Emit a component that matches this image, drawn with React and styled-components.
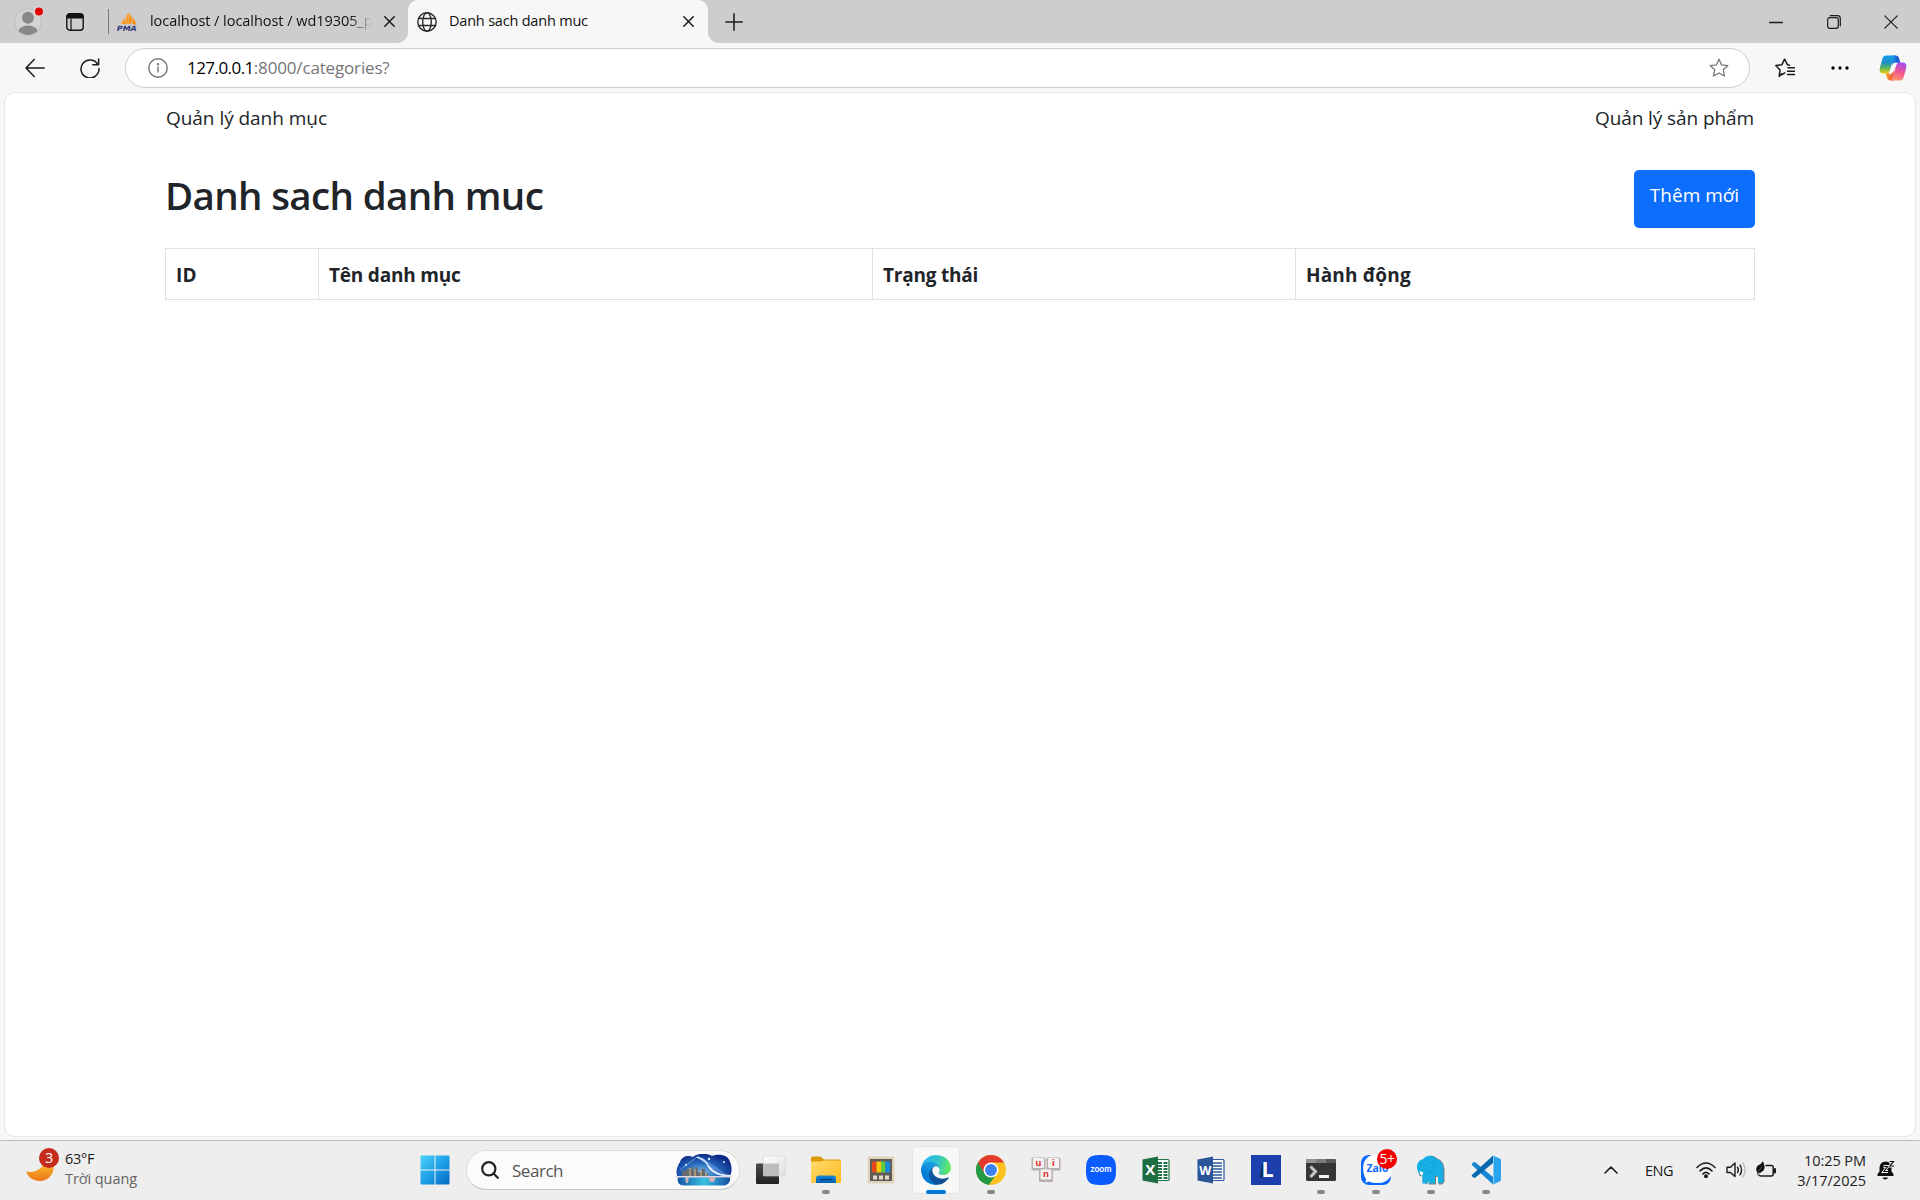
import React from "react";
import styled, { createGlobalStyle, css } from "styled-components";

const GlobalStyle = createGlobalStyle`
  * { box-sizing: border-box; }
  html, body { margin: 0; padding: 0; }
  body { font-family: "Open Sans", "Noto Sans", sans-serif; overflow: hidden; }
  svg { display: block; flex: none; }
`;

const Desktop = styled.div`
  width: 1920px;
  height: 1200px;
  display: flex;
  flex-direction: column;
  background: #f7f7f7;
`;

/* ---------- browser chrome ---------- */

const TabStrip = styled.div`
  height: 43px;
  flex: none;
  display: flex;
  background: #cdcdcd;
  color: #111;
`;

const StripCell = styled.div`
  width: ${(p) => p.$w}px;
  flex: none;
  display: flex;
  align-items: center;
  justify-content: center;
`;

const StripDivider = styled.div`
  width: 1px;
  height: 25px;
  margin: 9px 0 0 19px;
  background: #777;
`;

const Tab = styled.div`
  width: ${(p) => p.$w}px;
  height: 43px;
  flex: none;
  display: flex;
  align-items: center;
  padding: 0 0 0 8px;
  font-size: 14.5px;
  line-height: 20px;
  letter-spacing: ${(p) => p.$track}px;
  ${(p) =>
    p.$active &&
    css`
      position: relative;
      background: #f7f7f7;
      border-radius: 10px 10px 0 0;
      padding-left: 9px;
      &::before,
      &::after {
        content: "";
        position: absolute;
        bottom: 0;
        width: 10px;
        height: 10px;
      }
      &::before {
        left: -10px;
        background: radial-gradient(circle at 0 0, transparent 9.5px, #f7f7f7 10px);
      }
      &::after {
        right: -10px;
        background: radial-gradient(circle at 100% 0, transparent 9.5px, #f7f7f7 10px);
      }
    `}
`;

const TabTitle = styled.span`
  flex: none;
  width: ${(p) => p.$w}px;
  margin: 0 ${(p) => p.$after}px 2px ${(p) => p.$before}px;
  overflow: hidden;
  white-space: nowrap;
  ${(p) =>
    p.$fade &&
    css`
      mask-image: linear-gradient(to right, #000 calc(100% - 22px), transparent);
    `}
`;

const WindowControls = styled.div`
  margin: 0 1px 0 auto;
  display: flex;
`;

const Toolbar = styled.div`
  height: 49px;
  flex: none;
  display: flex;
  align-items: center;
`;

const ToolCell = styled.div`
  width: ${(p) => p.$w}px;
  flex: none;
  display: flex;
  justify-content: center;
`;

const AddressBar = styled.div`
  width: 1625px;
  height: 40px;
  flex: none;
  margin: 1px 0 0 15px;
  display: flex;
  align-items: center;
  padding: 0 20px 0 22px;
  background: #fff;
  border: 1px solid #cecece;
  border-radius: 20px;
  font-size: 17px;
  line-height: 24px;
`;

const Url = styled.span`
  margin: -1px auto 0 19px;
  color: #767676;
  letter-spacing: -0.16px;
`;

const Host = styled.span`
  color: #000;
  letter-spacing: -0.55px;
`;

const Viewport = styled.main`
  width: 1912px;
  height: 1045px;
  flex: none;
  margin: 0 auto 0 4px;
  background: #fff;
  border: 1px solid #e6e6e6;
  border-radius: 11px;
`;

/* ---------- page ---------- */

const Container = styled.div`
  width: 1590px;
  margin: 0 0 0 160px;
  color: #212529;
  font-size: 19px;
  line-height: 30px;
`;

const Nav = styled.nav`
  display: flex;
  justify-content: space-between;
  padding: 10px 1px 0 1px;
`;

const NavLink = styled.span`
  letter-spacing: ${(p) => p.$track}px;
`;

const PageHeader = styled.header`
  display: flex;
  justify-content: space-between;
  margin-top: 37px;
  height: 58px;
`;

const Title = styled.h1`
  margin: 0;
  font-size: 38.5px;
  font-weight: 600;
  line-height: 50px;
  letter-spacing: -0.64px;
`;

const PrimaryButton = styled.button`
  width: 121px;
  padding: 10px 0 0;
  border: 0;
  border-radius: 5px;
  background: #0d6efd;
  color: #fff;
  font: inherit;
  display: flex;
  justify-content: center;
`;

const Table = styled.table`
  width: 1590px;
  margin-top: 20px;
  table-layout: fixed;
  border-collapse: collapse;
`;

const HeadCell = styled.th`
  width: ${(p) => p.$w}px;
  height: 51px;
  padding: 2px 10px 0;
  text-align: left;
  font-weight: 700;
  letter-spacing: ${(p) => p.$track}px;
  border: 1px solid #dee2e6;
`;

/* ---------- taskbar ---------- */

const Taskbar = styled.footer`
  height: 60px;
  margin-top: auto;
  flex: none;
  display: flex;
  align-items: stretch;
  background: #eee;
  box-shadow: inset 0 1px #bbb;
  font-size: 14.5px;
  line-height: 20px;
  color: #1b1b1b;
`;

const Weather = styled.div`
  width: 407px;
  display: flex;
  padding: 6px 0 0 26px;
`;

const WeatherIcon = styled.div`
  position: relative;
  width: 39px;
  height: 48px;
  padding-top: 15px;
`;

const Badge = styled.span`
  position: absolute;
  left: ${(p) => p.$x}px;
  top: ${(p) => p.$y}px;
  width: 20px;
  height: 20px;
  border-radius: 50%;
  background: ${(p) => p.$bg};
  color: #fff;
  font-size: 14px;
  line-height: 20px;
  letter-spacing: -0.4px;
  text-align: center;
`;

const Lines = styled.div`
  display: flex;
  flex-direction: column;
  padding-top: 3px;
`;

const Line = styled.span`
  color: ${(p) => (p.$muted ? "#636363" : "#1b1b1b")};
  letter-spacing: ${(p) => p.$track || 0}px;
`;

const Slot = styled.div`
  position: relative;
  width: 55px;
  display: flex;
  align-items: center;
  justify-content: center;
  &::after {
    content: "";
    position: absolute;
    bottom: 6px;
    height: 4px;
    border-radius: 2px;
    width: ${(p) => (p.$active ? 20 : p.$open ? 8 : 0)}px;
    background: ${(p) => (p.$active ? "#0078d4" : "#868686")};
  }
`;

const ActiveTile = styled.div`
  width: 48px;
  height: 48px;
  display: flex;
  align-items: center;
  justify-content: center;
  background: #f8f8f8;
  border: 1px solid #e2e2e2;
  border-radius: 5px;
`;

const SearchBox = styled.div`
  width: 274px;
  height: 40px;
  margin: 10px 3px 0 4px;
  display: flex;
  align-items: center;
  justify-content: space-between;
  padding: 0 6px 0 14px;
  background: #fbfbfb;
  border: 1px solid #ddd;
  border-bottom-color: #c4c4c4;
  border-radius: 20px;
`;

const SearchLabel = styled.span`
  margin: 1px auto 0 13px;
  font-size: 17px;
  letter-spacing: -0.47px;
  color: #555;
`;

const Tray = styled.div`
  margin-left: auto;
  display: flex;
  align-items: center;
  padding-right: 25px;
`;

const Language = styled.span`
  width: 30px;
  margin: 1px 21px 0 27px;
  letter-spacing: -0.45px;
`;

const TrayIcons = styled.div`
  display: flex;
  gap: 10px;
  width: 82px;
`;

const Clock = styled(Lines)`
  width: 88px;
  margin: 0 11px 0 0;
  padding: 1px 0 0;
  text-align: right;
`;

/* ---------- icons ---------- */

const Stroke = ({ size = 20, h, w = 1.3, color = "#1a1a1a", children }) => (
  <svg width={size} height={h || size} viewBox={`0 0 ${size} ${h || size}`} fill="none" stroke={color} strokeWidth={w} strokeLinecap="round" strokeLinejoin="round">
    {children}
  </svg>
);

const Avatar = () => (
  <svg width="32" height="32" viewBox="0 0 32 32">
    <defs><clipPath id="av"><circle cx="14" cy="16" r="13" /></clipPath></defs>
    <circle cx="14" cy="16" r="13.3" fill="#d5d3d1" stroke="#bdbbb9" strokeWidth=".8" />
    <g clipPath="url(#av)" fill="#8a8886">
      <circle cx="14" cy="11.800" r="6" />
      <ellipse cx="14" cy="26.500" rx="10" ry="7" />
    </g>
    <circle cx="25" cy="5.500" r="5" fill="#dcdcdc" />
    <circle cx="25" cy="5.500" r="4" fill="#e60000" />
  </svg>
);

const Workspaces = () => (
  <svg width="18" height="18" viewBox="0 0 18 18">
    <rect x=".8" y=".8" width="16.4" height="16.4" rx="3" fill="none" stroke="#111" strokeWidth="1.4" />
    <path d="M.5 5.500V3.500a3 3 0 0 1 3-3h11a3 3 0 0 1 3 3v2z" fill="#111" />
    <path d="M5 5.500V17" stroke="#111" strokeWidth="1.2" />
  </svg>
);

const PmaText = styled.text`
  font: italic 800 7.2px "DejaVu Sans", sans-serif;
  fill: #2f3a78;
`;

const PhpMyAdmin = () => (
  <svg width="20" height="20" viewBox="0 0 20 20">
    <defs><linearGradient id="pm"><stop offset="0" stopColor="#fcd9a4" /><stop offset="1" stopColor="#f68a06" /></linearGradient></defs>
    <path d="M6.800 3C7 7 5.500 11 1 13.200C3 12 6 12 8 12.200Z" fill="url(#pm)" />
    <path d="M11.500.5C8.300 4 8.600 9 7.500 12.500Q10 11.500 12.500 12C11 8 12.500 4 11.500.5Z" fill="#f9a12f" />
    <path d="M12.300 1C15 4 15 8 14.500 11.500L12.600 12C11.600 8 12.900 4 12.300 1ZM15 4.500C17.500 7 18.500 10 19.300 12.800L15.200 12C16 9 15.800 7 15 4.500Z" fill="#f68a06" />
    <PmaText x="-.2" y="19.200" textLength="20" lengthAdjust="spacingAndGlyphs">PMA</PmaText>
  </svg>
);

const Cross = ({ size = 11, w = 1.5 }) => (
  <Stroke size={size} w={w}><path d={`M.8.8 ${size - 0.8} ${size - 0.8}M${size - 0.8}.8.8 ${size - 0.8}`} /></Stroke>
);

const Globe = () => (
  <Stroke w={1.4} color="#2b2b2b">
    <circle cx="10" cy="10" r="9.200" />
    <ellipse cx="10" cy="10" rx="4.300" ry="9.200" />
    <path d="M1.500 6.500h17M1.500 13.500h17" />
  </Stroke>
);

const Copilot = () => (
  <svg width="28" height="26" viewBox="0 0 28 26">
    <defs>
      <linearGradient id="ca" x1="0" y1="0" x2="0" y2="1"><stop offset="0" stopColor="#169bea" /><stop offset=".4" stopColor="#1e90c8" /><stop offset=".7" stopColor="#5fb85a" /><stop offset="1" stopColor="#f4cf0b" /></linearGradient>
      <linearGradient id="cb" x1=".6" y1="0" x2=".3" y2="1"><stop offset="0" stopColor="#a84df0" /><stop offset=".5" stopColor="#f0568c" /><stop offset="1" stopColor="#fd9b6d" /></linearGradient>
      <linearGradient id="cc"><stop offset="0" stopColor="#1d8fe8" /><stop offset="1" stopColor="#1b46c4" /></linearGradient>
      <linearGradient id="cd"><stop offset="0" stopColor="#f9a529" /><stop offset="1" stopColor="#ec4b3c" /></linearGradient>
    </defs>
    <path d="M13 .5h3.500c2 0 3 1 3.500 2.800l1.300 4.400h-4.500c-2 0-3 1-3.500 3z" fill="url(#cc)" />
    <path d="M15 25.500h-3.500c-2 0-3-1-3.500-2.800L6.700 18.300h4.500c2 0 3-1 3.500-3z" fill="url(#cd)" />
    <path d="M7 .5h10c-1.500.3-2.200 1.500-2.700 3.200L11 15c-.8 2.500-1.800 3.500-4 3.500H4.500C1.500 18.500 0 16.500.8 13L3.300 4C4 1.700 5 .5 7 .5z" fill="url(#ca)" />
    <path d="M21 25.500H11c1.500-.3 2.200-1.500 2.700-3.200L17 11c.8-2.500 1.800-3.500 4-3.500h2.500c3 0 4.500 2 3.700 5.500L24.700 22c-.7 2.300-1.700 3.500-3.700 3.500z" fill="url(#cb)" />
    <path d="M15.800 7.800h1.500c-1.300.5-1.800 1.400-2.300 3l-2 7c-.4 1-.8 1.600-1.800 1.800h-1.400c1.300-.5 1.700-1.300 2.200-2.800l2-7c.4-1.200.8-1.800 1.800-2z" fill="#fff" />
  </svg>
);

const Moon = () => (
  <svg width="28" height="20" viewBox="0 0 28 20">
    <defs><linearGradient id="mo" x1="0" y1="0" x2="0" y2="1"><stop offset="0" stopColor="#f7c531" /><stop offset="1" stopColor="#ee7417" /></linearGradient></defs>
    <path d="M.3 10.500C8 12.500 17 8 18.500.2C24-1 27.700 2 27.700 6.500C27.700 14 21.500 20 14 20C7.500 20 2 16.500.3 10.500z" fill="url(#mo)" />
  </svg>
);

const Windows = () => (
  <svg width="30" height="30" viewBox="0 0 30 30">
    <defs><linearGradient id="wi" x1="0" y1="0" x2="1" y2="1"><stop offset="0" stopColor="#4dd2fc" /><stop offset=".5" stopColor="#1da0e6" /><stop offset="1" stopColor="#0669c4" /></linearGradient></defs>
    <path d="M1.500.5H14.500V14.500H.5V1.500a1 1 0 0 1 1-1zM15.500.5H28.500a1 1 0 0 1 1 1V14.500H15.500zM.5 15.500H14.500V29.500H1.500a1 1 0 0 1-1-1zM15.500 15.500H29.500V28.500a1 1 0 0 1-1 1H15.500z" fill="url(#wi)" />
  </svg>
);

const Bridge = () => (
  <svg width="58" height="32" viewBox="0 0 58 32">
    <defs>
      <radialGradient id="br" cx=".45" cy=".6" r=".6"><stop offset="0" stopColor="#78b9e4" /><stop offset=".5" stopColor="#286dc0" /><stop offset="1" stopColor="#0c2a88" /></radialGradient>
      <linearGradient id="bw"><stop offset="0" stopColor="#1654a5" /><stop offset=".5" stopColor="#35c3e0" /><stop offset="1" stopColor="#1750a5" /></linearGradient>
    </defs>
    <path d="M5 8C7 2 13 1 18 3C22-1 33-1 37 2C44-1 54 1 55 8C58 14 56 19 55 24C55 29 52 31 48 31H9C4 31 2 28 3 23C0 19 2 12 5 8z" fill="url(#br)" />
    <path d="M3 24H55C55 29 52 31.500 48 31.500H9C4 31.500 2 28 3 24z" fill="url(#bw)" />
    <path d="M7 22V17h4v-2h4v-2h3v3h2v-3l3 1v4h3v-3h4v4h3v3z" fill="#676b70" />
    <path d="M15 14v8M20 15v7M26 16v6M31 19v3" stroke="#e0bc82" strokeWidth="1" />
    <path d="M22 3Q31 6 34 13Q40 22 57 22" stroke="#edf3ff" strokeWidth="1.800" fill="none" />
    <path d="M23 3L48 22M27 4L52 22M5 16L22 3" stroke="#a5c8f0" strokeWidth=".6" />
    <path d="M0 22.700H57" stroke="#dcdce8" strokeWidth="1.400" />
    <path d="M10 23h4l-1 6h-2zM33 23h8l-2 5h-4z" fill="#c9b3bb" />
    <circle cx="34" cy="5" r="1.200" fill="#dfeaff" /><circle cx="49" cy="8" r="1" fill="#dfeaff" /><circle cx="11" cy="11" r="1" fill="#dfeaff" />
  </svg>
);

const TaskView = () => (
  <svg width="30" height="30" viewBox="0 0 30 30">
    <defs>
      <linearGradient id="td" x1="0" y1="0" x2="0" y2="1"><stop offset="0" stopColor="#4a4a48" /><stop offset="1" stopColor="#222" /></linearGradient>
      <linearGradient id="tl" x1="0" y1="0" x2="1" y2="1"><stop offset="0" stopColor="#fff" /><stop offset="1" stopColor="#dedede" /></linearGradient>
    </defs>
    <rect y="8.500" width="23" height="20.500" rx="1" fill="url(#td)" />
    <rect x="7.500" y="1" width="22" height="20" rx="1" fill="url(#tl)" stroke="#d5d5d5" strokeWidth=".6" />
    <path d="M7.500 8.500H23V21H7.500z" fill="#bdbdbd" />
  </svg>
);

const Explorer = () => (
  <svg width="30" height="28" viewBox="0 0 30 28">
    <defs>
      <linearGradient id="ex" x1="0" y1="0" x2="1" y2="1"><stop offset="0" stopColor="#ffdb6e" /><stop offset="1" stopColor="#fdb91c" /></linearGradient>
      <linearGradient id="eb" x1="0" y1="0" x2="0" y2="1"><stop offset="0" stopColor="#1687dc" /><stop offset="1" stopColor="#0762ad" /></linearGradient>
    </defs>
    <path d="M0 2a1.500 1.500 0 0 1 1.500-1.500H9.500L13 3.500H29a1 1 0 0 1 1 1V12H0z" fill="#dc9a05" />
    <path d="M0 6.500Q0 5.500 1 5.500H9.500L13 4.500H29q1 0 1 1V26q0 1-1 1H1q-1 0-1-1z" fill="url(#ex)" />
    <path d="M5 27V22.500a3 3 0 0 1 3-3H22a3 3 0 0 1 3 3V27z" fill="url(#eb)" />
    <path d="M9 23.500H21" stroke="#07488d" strokeWidth="1.300" strokeLinecap="round" />
  </svg>
);

const PowerToys = () => (
  <svg width="28" height="28" viewBox="0 0 28 28">
    <rect x=".5" y=".5" width="27" height="27" rx="1.500" fill="#e1d3ba" />
    <rect x="3" y="3" width="22" height="22" fill="#5e5c5a" />
    <path d="M5 5.500h4.500v11H5z" fill="#e84a1c" /><path d="M9.500 5.500H14v11H9.500z" fill="#fdc60b" />
    <path d="M14 5.500h4.500v11H14z" fill="#5fcc40" /><path d="M18.500 5.500H23v11h-4.500z" fill="#168ce0" />
    <path d="M6 19.500h4v4H6zM12 19.500h4v4h-4zM18 19.500h4v4h-4z" fill="#e5dac5" />
  </svg>
);

const Edge = () => (
  <svg width="30" height="30" viewBox="0 0 256 256">
    <defs>
      <linearGradient id="e1" x1="60" y1="180" x2="240" y2="180" gradientUnits="userSpaceOnUse"><stop offset="0" stopColor="#0c59a4" /><stop offset="1" stopColor="#114a8b" /></linearGradient>
      <linearGradient id="e2" x1="150" y1="100" x2="45" y2="220" gradientUnits="userSpaceOnUse"><stop offset="0" stopColor="#1b9de2" /><stop offset=".3" stopColor="#1595df" /><stop offset=".7" stopColor="#0680d7" /><stop offset="1" stopColor="#0078d4" /></linearGradient>
      <linearGradient id="e3" x1="20" y1="60" x2="250" y2="110" gradientUnits="userSpaceOnUse"><stop offset="0" stopColor="#2eb4ec" /><stop offset=".5" stopColor="#31c5c9" /><stop offset="1" stopColor="#66eb5c" /></linearGradient>
    </defs>
    <path fill="url(#e1)" d="M231 190.500c-3.400 1.800-6.900 3.400-10.500 4.700a101.900 101.900 0 0 1-35.900 6.500c-47.300 0-88.500-32.500-88.500-74.300a31.500 31.500 0 0 1 16.400-27.300c-42.800 1.800-53.800 46.400-53.800 72.500 0 73.900 68.100 81.400 82.800 81.400 7.900 0 19.800-2.300 27-4.600l1.300-.4a128.300 128.300 0 0 0 66.600-52.800 4 4 0 0 0-5.400-5.700z" />
    <path fill="url(#e2)" d="M105.700 241.400a79.200 79.200 0 0 1-22.700-21.300 80.700 80.700 0 0 1 29.500-120c3.200-1.500 8.500-4.100 15.600-4a32.400 32.400 0 0 1 25.700 13 31.900 31.900 0 0 1 6.300 18.700c0-.2 24.500-79.600-80-79.600-43.900 0-80 41.600-80 78.200a130.200 130.200 0 0 0 12.100 56 128 128 0 0 0 156.400 67.100 75.500 75.500 0 0 1-62.900-8.100z" />
    <path fill="url(#e3)" d="M152.300 148.900c-.9 1-3.400 2.500-3.400 5.600 0 2.600 1.700 5.200 4.800 7.300 14.300 10 41.400 8.600 41.500 8.600a59.600 59.600 0 0 0 30.300-8.300 61.400 61.400 0 0 0 30.400-52.900c.3-22.400-8-37.300-11.300-43.900C223.500 23.900 177.700 0 128 0A128 128 0 0 0 0 126.200c.5-36.500 36.800-66 80-66 3.500 0 23.500.3 42 10.100 16.300 8.600 24.900 19 30.800 29.200 6.200 10.700 7.300 24.100 7.300 29.500 0 5.300-2.700 13.300-7.800 19.900z" />
  </svg>
);

const Chrome = () => (
  <svg width="30" height="30" viewBox="0 0 48 48">
    <circle cx="24" cy="24" r="24" fill="#fcc31e" />
    <path d="M3.200 12l10.400 18A12 12 0 0 0 24 36c1.200 0 2.300-.2 3.400-.5L20.500 47.700A24 24 0 0 1 3.200 12z" fill="#249a45" />
    <path d="M20.500 47.700L30.500 34L24 24L3.200 12A24 24 0 0 0 20.500 47.700z" fill="#249a45" />
    <path d="M24 0c8.900 0 16.600 4.800 20.800 12H24L13.600 30L3.200 12A24 24 0 0 1 24 0z" fill="#e33b2e" />
    <circle cx="24" cy="24" r="12" fill="#fff" /><circle cx="24" cy="24" r="9.500" fill="#3e82f1" />
  </svg>
);

const KeyLabel = styled.text`
  font: 700 9.500px "Liberation Sans", sans-serif;
  fill: #e02424;
  text-anchor: middle;
`;

const Unikey = () => (
  <svg width="30" height="26" viewBox="0 0 30 26">
    {[["u", 0.5, 0.5], ["i", 15.5, 0.5], ["n", 8, 12]].map(([t, x, y]) => (
      <g key={t} transform={`translate(${x} ${y})`}>
        <rect width="14" height="13" rx="1.500" fill="#b5b0ae" />
        <rect x="1.500" y=".5" width="11" height="10" rx="1" fill="#f5f2f1" />
        <KeyLabel x="6.800" y="8">{t}</KeyLabel>
      </g>
    ))}
  </svg>
);

const LogoText = styled.text`
  font-family: ${(p) => p.$face || "Lato"}, sans-serif;
  font-weight: 700;
  font-size: ${(p) => p.$size}px;
  fill: ${(p) => p.$fill || "#fff"};
  text-anchor: middle;
`;

const Zoom = () => (
  <svg width="30" height="30" viewBox="0 0 30 30">
    <path d="M15 0C27 0 30 3 30 15S27 30 15 30S0 27 0 15S3 0 15 0z" fill="#0b5cff" />
    <LogoText x="15" y="16.800" $size={8.5} textLength="21" lengthAdjust="spacingAndGlyphs">zoom</LogoText>
  </svg>
);

const Office = ({ letter, color, dark, sheet }) => (
  <svg width="28" height="28" viewBox="0 0 28 28">
    <rect x="14" y="3.500" width="13" height="21" rx="1" fill="#fff" stroke={color} strokeWidth="1.200" />
    {sheet ? (
      <path d="M16 7h4M21.500 7h4M16 10h4M21.500 10h4M16 13h4M21.500 13h4M16 16h4M21.500 16h4M16 19h4M21.500 19h4M16 22h4M21.500 22h4" stroke={color} strokeWidth="1.800" />
    ) : (
      <path d="M15 7H25M15 10H25M15 13H25M15 16H25M15 19H25M15 22H25" stroke={color} strokeWidth="1.400" />
    )}
    <path d="M.5 3.500L16 .5V27.500L.5 24.500z" fill={dark} />
    <LogoText x="8.300" y="19" $size={letter === "W" ? 12.5 : 15} $face='"Open Sans"'>{letter}</LogoText>
  </svg>
);

const Laragon = () => (
  <svg width="30" height="30" viewBox="0 0 30 30">
    <path d="M0 0h30v30H0z" fill="#1d3fae" />
    <path d="M11.500 6L8.500 23.500L13 21.500z" fill="#092f62" />
    <LogoText x="16.700" y="21.700" $size={21.5} $face='"Open Sans"'>L</LogoText>
  </svg>
);

const Terminal = () => (
  <svg width="30" height="24" viewBox="0 0 30 24">
    <rect y="1" width="30" height="22" rx="1.500" fill="#363636" />
    <path d="M0 5V2.500Q0 1 1.500 1H10V5z" fill="#929292" /><path d="M10 1H20V5H10z" fill="#7b7b7b" /><path d="M20 1h8.500Q30 1 30 2.500V5H20z" fill="#5a5a5a" />
    <path d="M4.500 8.500L9.500 13.500L4.500 19" stroke="#c6c6c6" strokeWidth="3" fill="none" />
    <path d="M13 17h10v3H13z" fill="#f3f3f3" />
  </svg>
);

const Zalo = () => (
  <svg width="30" height="30" viewBox="0 0 30 30">
    <rect width="30" height="30" rx="8" fill="#0a68ff" />
    <path d="M11 0H22Q30 0 30 8V21Q25 29 15 28Q11 28 8 26.500Q6 27.500 4 27.500Q5.500 26 5 24Q1 18 2.500 9Q4.500 2 11 0z" fill="#fff" />
    <LogoText x="16.500" y="17" $size={10} $fill="#0a68ff" $face='"Open Sans"' textLength="22" lengthAdjust="spacingAndGlyphs">Zalo</LogoText>
  </svg>
);

const Elephant = () => (
  <svg width="29" height="30" viewBox="0 0 29 30">
    <path d="M2 14C1 8 4 5 8 4.500C10 0 18-.5 21 3.500C27 5 29 12 28.500 18V27L26 29.500H22.500V22H20V29.500H13V25L11 29.500L6.500 27V20.500L5.500 21.500L3 20.500V16z" fill="#555" opacity=".75" />
    <path d="M1 13C.5 8 3.500 5 7 4.300C10 0 17-.3 20 3.500C26 5 28 12 27.500 18V28H22V21H19V28.500H12.500V24.500L11 28.500H6.500V20.500C4 21 2 18 1 13z" fill="#15afe6" />
    <path d="M5 10Q8 8.500 10.500 10M13.500 7Q20 8 18.500 15Q15 19 11 15" stroke="#0a9dd4" strokeWidth=".9" fill="none" />
    <path d="M3.500 16L7.500 17.500L6 20.500L4.500 20z" fill="#fff" />
  </svg>
);

const VsCode = () => (
  <svg width="30" height="30" viewBox="0 0 30 30">
    <path d="M1.200 8.500L3 7.200Q3.700 6.800 4.500 7.400L22 22V29.500L.9 10Q.3 9.200 1.200 8.500z" fill="#1586d2" />
    <path d="M1.200 21.500L3 22.800Q3.700 23.200 4.500 22.600L22 8V.5L.9 20Q.3 20.800 1.200 21.500z" fill="#0768ad" />
    <path d="M22 .4L28.700 3.500Q30 4.200 30 5.500V24.500Q30 25.800 28.700 26.500L22 29.600Q22.500 29 22.500 28V2Q22.500 1 22 .4z" fill="#2aa4f0" />
  </svg>
);

const starPath = "M10 1.200L12.600 6.900L18.900 7.600L14.300 11.800L15.500 18L10 15L4.500 18L5.700 11.800L1.100 7.600L7.400 6.900Z";

const Wifi = () => (
  <Stroke size={20} h={18} w={1.6}>
    <path d="M1 6.500Q10-2.500 19 6.500M4 9.800Q10 4 16 9.800M7 12.900Q10 10 13 12.900" />
    <circle cx="10" cy="15.300" r="1.200" fill="#1a1a1a" />
  </Stroke>
);

const Volume = () => (
  <Stroke size={20} h={18} w={1.4}>
    <path d="M1 6.200H4.500L9 2V15.500L4.500 11.500H1z" />
    <path d="M11.500 6.200Q13.200 9 11.500 11.500M14 4Q17 9 14 13.800" />
    <path d="M16.800 2Q21.500 9 16.800 16" stroke="#bcbcbc" />
  </Stroke>
);

const Battery = () => (
  <Stroke size={21} h={18} w={1.5}>
    <path d="M10 4.500H15.500Q17.200 4.500 17.200 6.500V13Q17.200 15 15.500 15H5Q3.500 15 3 14" />
    <path d="M19 8V11.500" strokeWidth="2" />
    <path d="M6.800.2Q10 6 7.500 9.500Q5 12 1.500 12.500Q-1 8 1.500 4.800Q5 3.500 6.800.2z" fill="#111" stroke="none" />
    <path d="M1.500 14Q2.500 9.500 5.500 6" stroke="#555" strokeWidth="1" />
  </Stroke>
);

const Bell = () => (
  <svg width="18" height="20" viewBox="0 0 18 20">
    <path d="M.5 16V14L2.500 11.500V7.500Q3 1.800 8.500 1.500Q14.500 2 14.500 8V11.500L16.500 14V16z" fill="#111" />
    <path d="M5.500 17.500H11Q10.500 19.500 8.200 19.500T5.500 17.500z" fill="#111" />
    <path d="M6.500 6.500h4L7 11.500h4M12.500 1.500h4L13 6h4" stroke="#eee" strokeWidth="3" fill="none" />
    <path d="M6.500 6.500h4L7 11.500h4M12.500 1.500h4L13 6h4" stroke="#111" strokeWidth="1.200" fill="none" />
  </svg>
);

/* ---------- composition ---------- */

const columns = [
  { label: "ID", w: 153, track: 0.3 },
  { label: "Tên danh mục", w: 554, track: -0.2 },
  { label: "Trạng thái", w: 423, track: -0.22 },
  { label: "Hành động", w: 459, track: 0.18 },
];

const pinned = [
  { name: "taskview", icon: <TaskView /> },
  { name: "explorer", icon: <Explorer />, open: true },
  { name: "powertoys", icon: <PowerToys /> },
  { name: "edge", icon: <ActiveTile><Edge /></ActiveTile>, active: true },
  { name: "chrome", icon: <Chrome />, open: true },
  { name: "unikey", icon: <Unikey /> },
  { name: "zoom", icon: <Zoom /> },
  { name: "excel", icon: <Office letter="X" color="#217346" dark="#1e6e42" sheet /> },
  { name: "word", icon: <Office letter="W" color="#2b579a" dark="#2a5699" /> },
  { name: "laragon", icon: <Laragon /> },
  { name: "terminal", icon: <Terminal />, open: true },
  { name: "zalo", icon: <Zalo />, open: true, badge: "5+" },
  { name: "elephant", icon: <Elephant />, open: true },
  { name: "vscode", icon: <VsCode />, open: true },
];

export default function App() {
  return (
    <Desktop>
      <GlobalStyle />
      <TabStrip>
        <StripCell $w={60}><Avatar /></StripCell>
        <StripCell $w={29}><Workspaces /></StripCell>
        <StripDivider />
        <Tab $w={299} $track={-0.04}>
          <PhpMyAdmin />
          <TabTitle $w={222} $before={13} $after={12} $fade>localhost / localhost / wd19305_php2</TabTitle>
          <Cross />
        </Tab>
        <Tab $w={300} $active $track={-0.2}>
          <Globe />
          <TabTitle $w={222} $before={12} $after={12}>Danh sach danh muc</TabTitle>
          <Cross />
        </Tab>
        <StripCell $w={52}>
          <Stroke size={18} w={1.5}><path d="M9 .8V17.200M.8 9H17.200" /></Stroke>
        </StripCell>
        <WindowControls>
          <StripCell $w={58}><Stroke size={14} w={1.3}><path d="M.5 7.500H13.500" /></Stroke></StripCell>
          <StripCell $w={57}>
            <Stroke size={14} w={1.2}>
              <rect x=".7" y="2.700" width="10.600" height="10.600" rx="2" />
              <path d="M3.200.7H10.500Q13.300.7 13.300 3.500V10.800" />
            </Stroke>
          </StripCell>
          <StripCell $w={57}><Cross size={14} w={1.2} /></StripCell>
        </WindowControls>
      </TabStrip>

      <Toolbar>
        <ToolCell $w={70}><Stroke w={1.5}><path d="M19.200 10H1M9.200 1.500L1 10L9.200 18.500" /></Stroke></ToolCell>
        <ToolCell $w={40}>
          <Stroke w={1.5}><path d="M18 6.800A9 9 0 1 0 19 10.500M18.600 1V6.800H12.800" /></Stroke>
        </ToolCell>
        <AddressBar>
          <Stroke w={1.4} color="#767676">
            <circle cx="10" cy="10" r="9.200" /><path d="M10 9V14" /><circle cx="10" cy="6.200" r=".5" fill="#767676" />
          </Stroke>
          <Url><Host>127.0.0.1</Host>:8000/categories?</Url>
          <Stroke color="#767676"><path d={starPath} /></Stroke>
        </AddressBar>
        <ToolCell $w={70}>
          <Stroke w={1.5}>
            <path d="M6.500 15.800L4.200 18.500L5 12L.8 7.600L6.800 6.800L9.600 1.200L12.500 6.800L14.500 7.200M6.500 16.800L9.800 14.800" />
            <path d="M13 9.800H19.500M12.500 13.200H19.500M12.500 16.600H19.500" />
          </Stroke>
        </ToolCell>
        <ToolCell $w={40}>
          <svg width="18" height="4" viewBox="0 0 18 4"><circle cx="2" cy="2" r="1.700" /><circle cx="9" cy="2" r="1.700" /><circle cx="16" cy="2" r="1.700" /></svg>
        </ToolCell>
        <ToolCell $w={66}><Copilot /></ToolCell>
      </Toolbar>

      <Viewport>
        <Container>
          <Nav>
            <NavLink $track={-0.04}>Quản lý danh mục</NavLink>
            <NavLink $track={-0.09}>Quản lý sản phẩm</NavLink>
          </Nav>
          <PageHeader>
            <Title>Danh sach danh muc</Title>
            <PrimaryButton>Thêm mới</PrimaryButton>
          </PageHeader>
          <Table>
            <thead>
              <tr>
                {columns.map((c) => <HeadCell key={c.label} $w={c.w} $track={c.track}>{c.label}</HeadCell>)}
              </tr>
            </thead>
          </Table>
        </Container>
      </Viewport>

      <Taskbar>
        <Weather>
          <WeatherIcon><Moon /><Badge $x={13} $y={2} $bg="#c42b1c">3</Badge></WeatherIcon>
          <Lines>
            <Line $track={-0.3}>63°F</Line>
            <Line $muted $track={-0.08}>Trời quang</Line>
          </Lines>
        </Weather>
        <Slot><Windows /></Slot>
        <SearchBox>
          <Stroke size={18} w={2.2} color="#222"><circle cx="7.800" cy="7.800" r="6.600" /><path d="M12.800 12.800L16.800 16.800" /></Stroke>
          <SearchLabel>Search</SearchLabel>
          <Bridge />
        </SearchBox>
        {pinned.map((p) => (
          <Slot key={p.name} $open={p.open} $active={p.active}>
            {p.icon}
            {p.badge && <Badge $x={29} $y={9} $bg="#f50000">{p.badge}</Badge>}
          </Slot>
        ))}
        <Tray>
          <Stroke size={14} h={8} w={1.6}><path d="M1 7L7 1L13 7" /></Stroke>
          <Language>ENG</Language>
          <TrayIcons><Wifi /><Volume /><Battery /></TrayIcons>
          <Clock>
            <Line $track={-0.06}>10:25 PM</Line>
            <Line>3/17/2025</Line>
          </Clock>
          <Bell />
        </Tray>
      </Taskbar>
    </Desktop>
  );
}
